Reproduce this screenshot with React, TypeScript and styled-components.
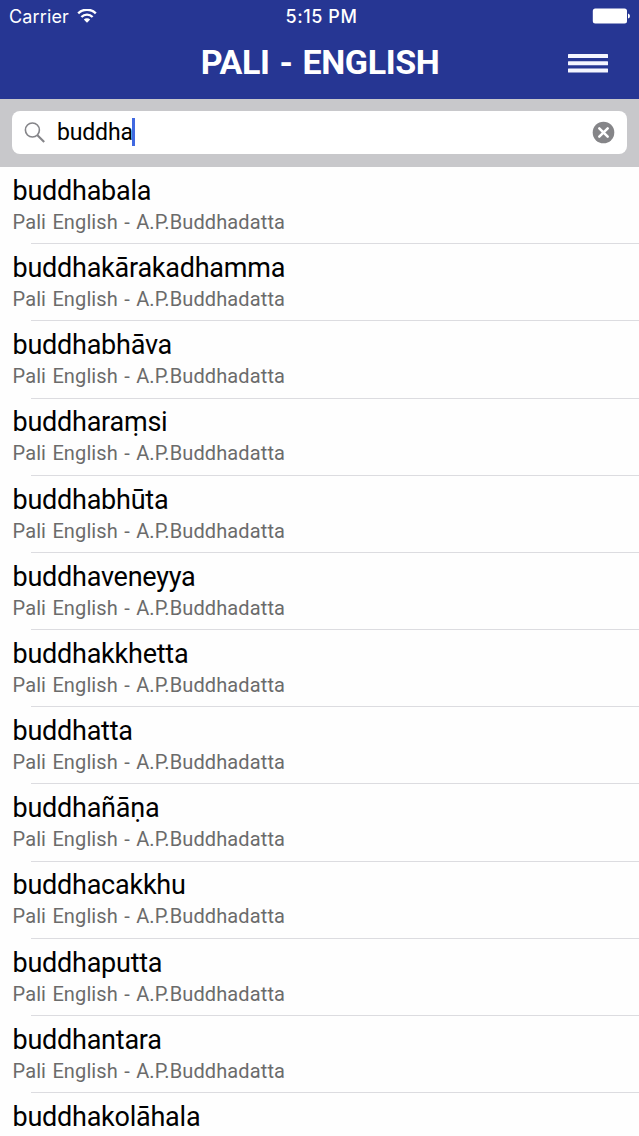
import React from 'react';
import styled, { createGlobalStyle } from 'styled-components';

const Global = createGlobalStyle`
  * { box-sizing: border-box; }
  body { margin: 0; background: #fff; font-family: Roboto, sans-serif; }
`;
const Screen = styled.div`
  width: 639px; height: 1136px; overflow: hidden; background: #fefefe;
  display: flex; flex-direction: column;
`;
const Header = styled.header`
  height: 99px; flex: none; background: #263693; color: #fff;
  display: flex; flex-direction: column;
`;
const StatusBar = styled.div`
  height: 32px; display: grid; grid-template-columns: 1fr auto 1fr; align-items: center;
  padding: 0 9px 0 9px; font-family: Inter, sans-serif; font-size: 18px;
`;
const Carrier = styled.div`display: flex; align-items: center; gap: 8px; letter-spacing: 0.15px;`;
const Time = styled.div`font-weight: 500; padding-left: 4px; letter-spacing: 0.55px;`;
const Battery = styled.svg`justify-self: end;`;
const NavBar = styled.div`
  height: 60px; display: grid; grid-template-columns: 1fr auto 1fr; align-items: center;
  padding: 0 31px;
`;
const Title = styled.h1`
  grid-column: 2; margin: 0; font-size: 34px; line-height: 40px; font-weight: 700;
  letter-spacing: -0.4px; word-spacing: 2px; padding-left: 1px;
`;
const Menu = styled.button`
  justify-self: end; border: 0; background: none; padding: 2px 0 0; display: flex;
`;
const SearchBar = styled.div`
  height: 68px; flex: none; background: #c8c8cb; padding: 12px;
`;
const Field = styled.div`
  height: 43px; border-radius: 8px; background: #fff; display: flex; align-items: center;
  padding: 0 12px; font-size: 23px;
`;
const Query = styled.span`margin-left: 12px; letter-spacing: -0.15px; line-height: 28px;`;
const Caret = styled.i`width: 3px; height: 28px; background: #4169e1; margin: -2px 0 0 -1px;`;
const Clear = styled.svg`margin-left: auto;`;
const List = styled.ul`list-style: none; margin: 0; padding: 0;`;
const Row = styled.li`
  height: 77.18px; padding: 7.92px 0 0 12.5px;
  background: linear-gradient(#dcdce0, #dcdce0) 31px 100% / 100% 1px no-repeat;
`;
const Word = styled.div`font-size: 27px; line-height: 32px; color: #000; letter-spacing: -0.24px;`;
const Source = styled.div`
  font-size: 20px; line-height: 24px; margin-top: 3px; color: #6b6b6b;
  letter-spacing: 0.12px; word-spacing: 1.2px;
`;

const words = [
  'buddhabala', 'buddhakārakadhamma', 'buddhabhāva', 'buddharaṃsi', 'buddhabhūta',
  'buddhaveneyya', 'buddhakkhetta', 'buddhatta', 'buddhañāṇa', 'buddhacakkhu',
  'buddhaputta', 'buddhantara', 'buddhakolāhala',
];

export default function App() {
  return (
    <Screen>
      <Global />
      <Header>
        <StatusBar>
          <Carrier>
            Carrier
            <svg width="20" height="15" viewBox="0 0 20 15" fill="none" stroke="#fff" strokeWidth="2.4">
              <path d="M1.2 4.4a12.4 12.4 0 0 1 17.6 0M4.4 8a7.9 7.9 0 0 1 11.2 0" />
              <path d="M10 13.8L6.8 10.6a4.5 4.5 0 0 1 6.4 0z" fill="#fff" stroke="none" />
            </svg>
          </Carrier>
          <Time>5:15 PM</Time>
          <Battery width="38" height="16" viewBox="0 0 38 16">
            <rect x="0.8" y="0.4" width="34.2" height="15" rx="2.5" fill="#fff" />
            <path d="M36 5.4q2 0.6 2 2.6t-2 2.6z" fill="#fff" />
          </Battery>
        </StatusBar>
        <NavBar>
          <Title>PALI - ENGLISH</Title>
          <Menu aria-label="Menu">
            <svg width="40" height="19" viewBox="0 0 40 19" fill="#f4f5ff">
              <rect width="40" height="4" rx="0.5" />
              <rect y="7.3" width="40" height="4" rx="0.5" />
              <rect y="14.6" width="40" height="4" rx="0.5" />
            </svg>
          </Menu>
        </NavBar>
      </Header>
      <SearchBar>
        <Field>
          <svg width="21" height="21" viewBox="0 0 21 21" fill="none" stroke="#858589" strokeWidth="1.6">
            <circle cx="8.4" cy="8" r="7" /><path d="M13.2 13l7 7" strokeWidth="2.1" />
          </svg>
          <Query>buddha</Query>
          <Caret />
          <Clear width="23" height="23" viewBox="0 0 23 23">
            <circle cx="11.5" cy="11.5" r="10.8" fill="#858588" />
            <path d="M7.3 7.3l8.4 8.4M15.7 7.3l-8.4 8.4" stroke="#fff" strokeWidth="2.5" strokeLinecap="round" />
          </Clear>
        </Field>
      </SearchBar>
      <List>
        {words.map((w) => (
          <Row key={w}>
            <Word>{w}</Word>
            <Source>Pali English - A.P.Buddhadatta</Source>
          </Row>
        ))}
      </List>
    </Screen>
  );
}
